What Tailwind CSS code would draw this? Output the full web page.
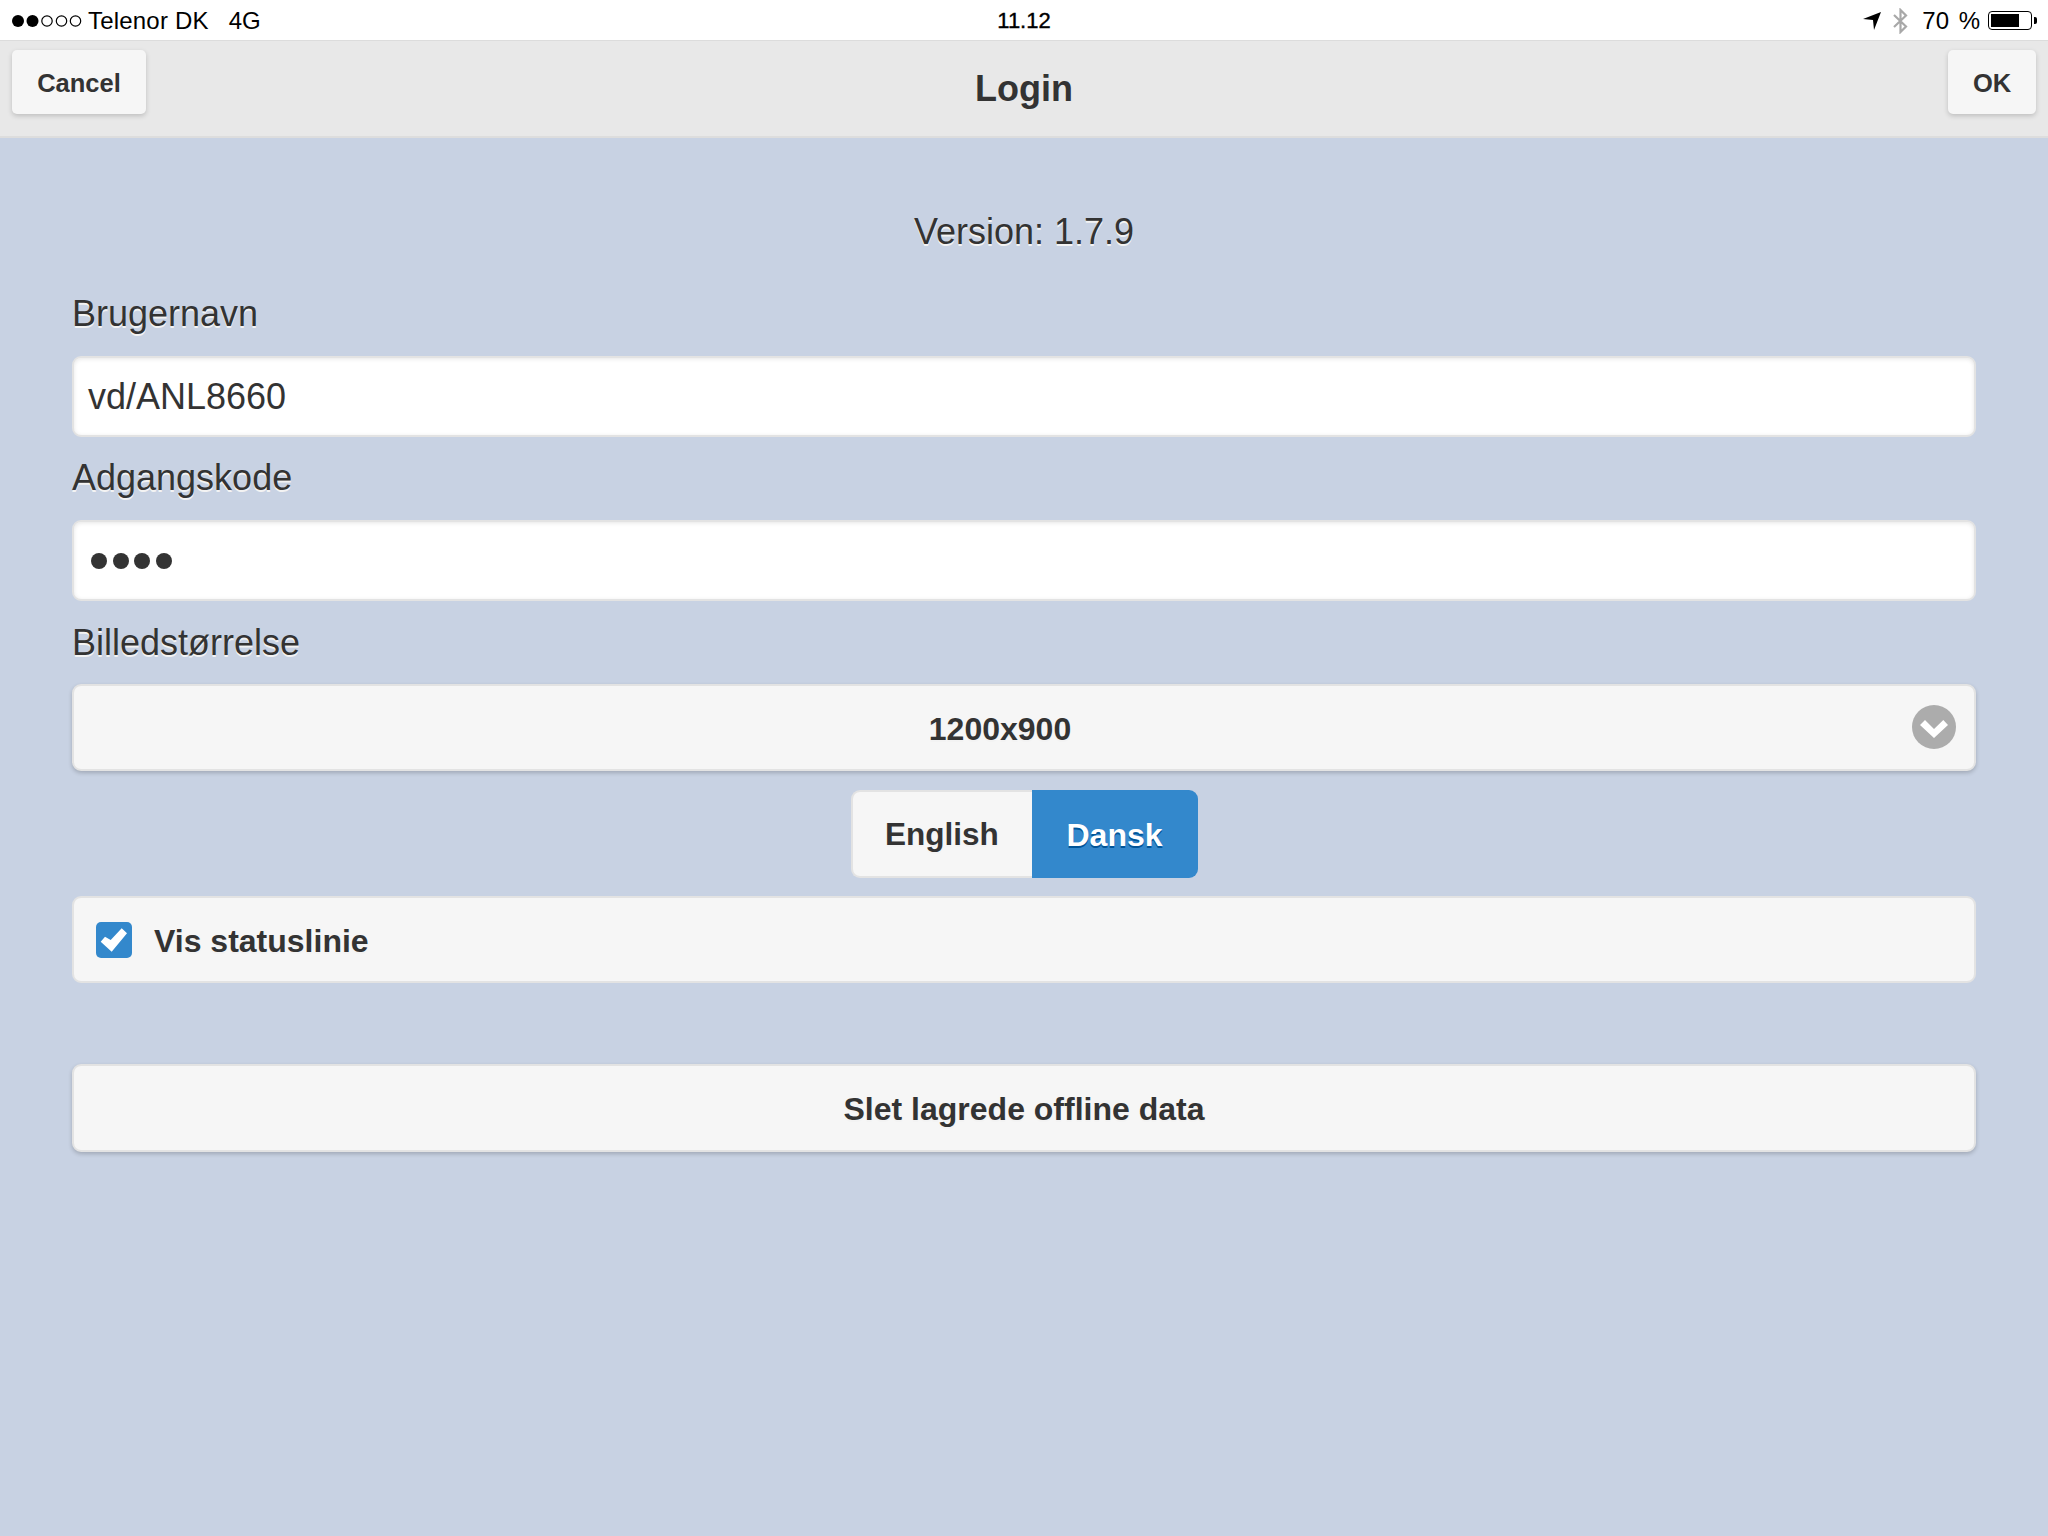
<!DOCTYPE html>
<html>
<head>
<meta charset="utf-8">
<script src="https://cdn.jsdelivr.net/npm/@tailwindcss/browser@4"></script>
</head>
<body class="m-0">
<div class="w-[2048px] h-[1536px] bg-[#c8d2e3] font-['Liberation_Sans',Arial,sans-serif] text-[#333] overflow-hidden flex flex-col">
  <div class="h-[41px] shrink-0 bg-white border-b border-[#dcdcdc] relative flex items-center justify-between pl-[12px] pr-[11px] pt-[1px] text-[24px] text-black">
    <div class="flex items-center">
      <svg width="70" height="16" viewBox="0 0 70 16" class="shrink-0">
        <circle cx="6" cy="8" r="6" fill="#000"/><circle cx="20.500" cy="8" r="6" fill="#000"/>
        <circle cx="35" cy="8" r="5.200" fill="none" stroke="#000" stroke-width="1.200"/><circle cx="49.500" cy="8" r="5.200" fill="none" stroke="#000" stroke-width="1.200"/><circle cx="63.500" cy="8" r="5.200" fill="none" stroke="#000" stroke-width="1.200"/>
      </svg>
      <span class="ml-[6px] tracking-[0.2px]">Telenor DK</span>
      <span class="ml-[20px]">4G</span>
    </div>
    <div class="absolute left-0 right-0 text-center text-[22px] [-webkit-text-stroke:0.4px_black]">11.12</div>
    <div class="flex items-center">
      <svg width="18" height="18" viewBox="0 0 18 18" class="mr-[12px]"><polygon points="18,0 0,7 10,8 11,18" fill="#000"/></svg>
      <svg width="15" height="26" viewBox="0 0 15 26" class="mr-[14px]"><path d="M1 7 L13 18.500 L7.500 24 L7.500 2 L13 7.500 L1 19" fill="none" stroke="#a8a8a8" stroke-width="2.200"/></svg>
      <span class="[word-spacing:3px]">70 %</span>
      <div class="ml-[8px] w-[44px] h-[19px] border border-black rounded-[4px] p-[2px] flex"><div class="w-[28px] h-full bg-black"></div></div>
      <div class="ml-[2px] w-[3px] h-[7px] bg-black rounded-r-[2px]"></div>
    </div>
  </div>

  <div class="h-[97px] shrink-0 bg-[#e8e8e8] border-b-2 border-[#dddddd] flex items-start justify-between px-[12px] pt-[9px] relative">
    <div class="w-[134px] h-[64px] pt-[2px] rounded-[5px] bg-[#f6f6f6] shadow-[0_2px_5px_rgba(0,0,0,0.18)] flex items-center justify-center font-bold text-[25.500px]">Cancel</div>
    <div class="absolute left-0 right-0 top-[27px] text-center font-bold text-[36px] leading-[42px]">Login</div>
    <div class="w-[88px] h-[64px] pt-[2px] rounded-[5px] bg-[#f6f6f6] shadow-[0_2px_5px_rgba(0,0,0,0.18)] flex items-center justify-center font-bold text-[25.500px]">OK</div>
  </div>

  <div class="flex flex-col px-[72px]">
    <div class="mt-[72px] h-[44px] leading-[44px] text-center text-[36px] [text-shadow:0_2px_0_#f3f3f3]">Version: 1.7.9</div>
    <div class="mt-[38px] h-[44px] leading-[44px] text-[36px] [text-shadow:0_2px_0_#f3f3f3]">Brugernavn</div>
    <div class="mt-[20px] h-[81px] rounded-[9px] bg-white border-2 border-[#e3e3e3] shadow-[inset_0_1px_4px_rgba(0,0,0,0.1)] flex items-center pl-[14px] text-[36px]">vd/ANL8660</div>
    <div class="mt-[19px] h-[44px] leading-[44px] text-[36px] [text-shadow:0_2px_0_#f3f3f3]">Adgangskode</div>
    <div class="mt-[20px] h-[81px] rounded-[9px] bg-white border-2 border-[#e3e3e3] shadow-[inset_0_1px_4px_rgba(0,0,0,0.1)] flex items-center pl-[17px] gap-[5.700px]">
      <span class="w-[16px] h-[16px] rounded-full bg-[#333]"></span><span class="w-[16px] h-[16px] rounded-full bg-[#333]"></span><span class="w-[16px] h-[16px] rounded-full bg-[#333]"></span><span class="w-[16px] h-[16px] rounded-full bg-[#333]"></span>
    </div>
    <div class="mt-[20px] h-[44px] leading-[44px] text-[36px] [text-shadow:0_2px_0_#f3f3f3]">Billedstørrelse</div>
    <div class="mt-[19px] h-[87px] pt-[2px] rounded-[9px] bg-[#f6f6f6] border-2 border-[#e3e3e3] shadow-[0_2px_4px_rgba(0,0,0,0.2)] flex items-center justify-center relative font-bold text-[32px] pr-[48px] [text-shadow:0_2px_0_#f3f3f3]">
      1200x900
      <svg width="44" height="44" viewBox="0 0 44 44" class="absolute right-[18px] top-[19px]"><circle cx="22" cy="22" r="22" fill="#acacac"/><polygon points="8,20 13,15 22,24 31.300,15 36,20 22,33" fill="#fff"/></svg>
    </div>
    <div class="mt-[19px] self-center flex h-[88px] font-bold">
      <div class="w-[181px] pt-[2px] rounded-l-[9px] bg-[#f6f6f6] border-2 border-r-0 border-[#e3e3e3] flex items-center justify-center text-[31.500px] [text-shadow:0_2px_0_#f3f3f3]">English</div>
      <div class="w-[166px] pt-[2px] rounded-r-[9px] bg-[#3388cc] text-white flex items-center justify-center text-[32px] [text-shadow:0_2px_0_#005599]">Dansk</div>
    </div>
    <div class="mt-[18px] h-[87px] rounded-[9px] bg-[#f6f6f6] border-2 border-[#e3e3e3] flex items-center pl-[22px] font-bold text-[32px] [text-shadow:0_2px_0_#f3f3f3]">
      <svg width="36" height="36" viewBox="0 0 36 36" class="mr-[22px] shrink-0"><rect width="36" height="36" rx="5" fill="#3388cc"/><polygon points="4.700,19.700 9,14.700 14.700,18 25.700,6.300 31,11.300 15.700,29.700" fill="#fff"/></svg>
      <span class="pt-[2px]">Vis statuslinie</span>
    </div>
    <div class="mt-[81px] h-[88px] pt-[2px] rounded-[9px] bg-[#f6f6f6] border-2 border-[#e3e3e3] shadow-[0_2px_4px_rgba(0,0,0,0.2)] flex items-center justify-center font-bold text-[32px] [text-shadow:0_2px_0_#f3f3f3]">Slet lagrede offline data</div>
  </div>
</div>
</body>
</html>
